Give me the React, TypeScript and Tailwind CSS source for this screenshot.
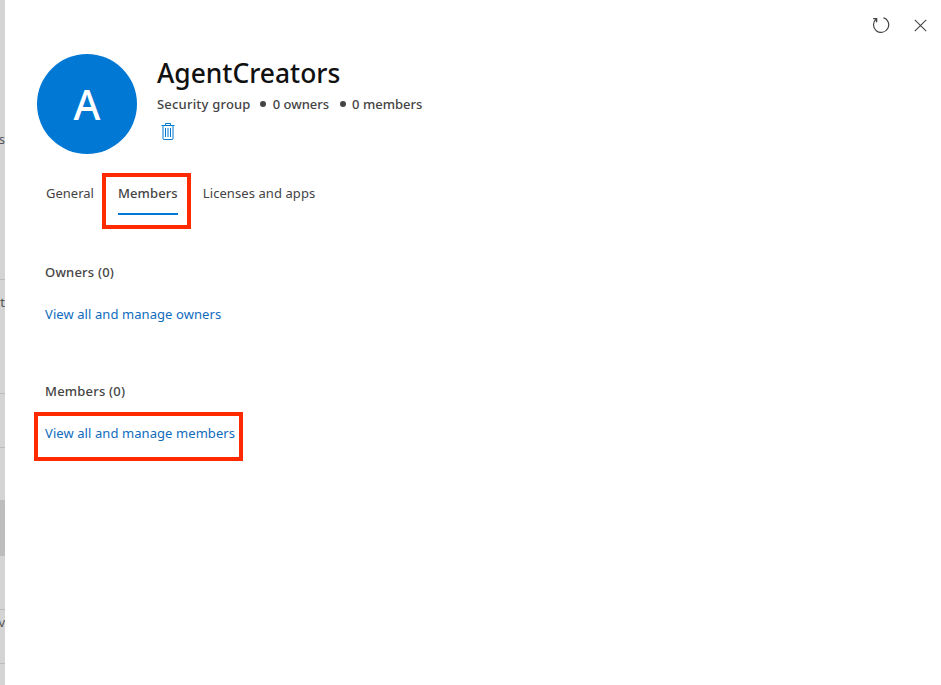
import React from "react";

function TrashIcon() {
  return (
    <svg width="14" height="17" viewBox="0 0 14 17" fill="none" stroke="#0078d4" strokeWidth="1">
      <path d="M0.5 2.5H13.5M2 2.5V15.5a1 1 0 0 0 1 1H11a1 1 0 0 0 1-1V2.5M4.5 2.5V0.5H9.5V2.5" />
      <path d="M4.5 5V14M7 5V14M9.5 5V14" />
    </svg>
  );
}

function RefreshIcon() {
  return (
    <svg width="18" height="18" viewBox="0 0 18 18" fill="none" stroke="#444" strokeWidth="1.2">
      <path d="M11.5 1.6A7.6 7.6 0 1 1 4.2 3" />
      <path d="M4.6 6.2V2.6H1.2" strokeWidth="1.4" />
    </svg>
  );
}

function CloseIcon() {
  return (
    <svg width="13" height="13" viewBox="0 0 13 13" fill="none" stroke="#444" strokeWidth="1.1">
      <path d="M0.8 0.8L12.2 12.2M12.2 0.8L0.8 12.2" />
    </svg>
  );
}

function Row({ h, text, dark, top }: { h: string; text?: string; dark?: boolean; top?: string }) {
  return (
    <div className={`${h} ${dark ? "bg-[#bdbdbd]" : ""} border-b border-[#bcbcbc] relative`}>
      {text && (
        <span className={`absolute ${top} right-0 text-[13px] leading-none text-[#555]`}>{text}</span>
      )}
    </div>
  );
}

export default function App() {
  return (
    <div className="w-[941px] h-[685px] flex overflow-hidden bg-white font-['Noto_Sans',sans-serif]">
      <div className="w-[5px] shrink-0 h-full bg-[#d4d4d4] overflow-hidden">
        <Row h="h-[280px]" text="s" top="top-[133px]" />
        <Row h="h-[114px]" text="rt" top="top-[16px]" />
        <Row h="h-[54px]" />
        <Row h="h-[53px]" />
        <Row h="h-[55px]" dark />
        <Row h="h-[54px]" text="v" top="top-[60px]" />
        <Row h="h-[54px]" />
        <div />
      </div>

      <div className="flex-1 relative pl-[32px] pt-[54px]">
        <div className="absolute top-[16px] right-[14px] flex items-center gap-[24px]">
          <RefreshIcon />
          <CloseIcon />
        </div>

        <div className="flex items-start">
          <div className="w-[100px] h-[100px] rounded-full bg-[#0078d4] flex items-center justify-center text-white text-[41px] font-medium leading-none">
            A
          </div>
          <div className="ml-[20px] pt-[2px]">
            <div className="text-[26.4px] leading-[34px] font-medium text-[#111]">AgentCreators</div>
            <div className="mt-[5px] flex items-center text-[13px] leading-[18px] font-medium text-[#444]">
              <span className="tracking-[0.2px]">Security group</span>
              <span className="ml-[9px] w-[6px] h-[6px] rounded-full bg-[#444]" />
              <span className="ml-[7px]">0 owners</span>
              <span className="ml-[11px] w-[6px] h-[6px] rounded-full bg-[#444]" />
              <span className="ml-[6px]">0 members</span>
            </div>
            <div className="mt-[10px] ml-[4px] flex">
              <TrashIcon />
            </div>
          </div>
        </div>

        <div className="mt-[28px] ml-[9px] flex text-[13px] leading-[18px] text-[#444]">
          <div className="pt-[2px]">General</div>
          <div className="ml-[24px] relative pt-[2px] pb-[13px] font-medium tracking-[0.12px]">
            Members
            <div className="absolute left-0 right-0 bottom-0 h-[2px] bg-[#0078d4]" />
            <div className="absolute left-[-16px] right-[-13px] top-[-9px] bottom-[-14px] border-[4px] border-[#ff2a00]" />
          </div>
          <div className="ml-[25px] pt-[2px] tracking-[0.08px]">Licenses and apps</div>
        </div>

        <div className="ml-[8px] mt-[48px] text-[13px] leading-[18px] font-medium tracking-[0.2px] text-[#444]">Owners (0)</div>
        <div className="ml-[8px] mt-[24px] text-[13px] leading-[18px] tracking-[0.08px] text-[#0f6cbd]">View all and manage owners</div>
        <div className="ml-[8px] mt-[59px] text-[13px] leading-[18px] font-medium tracking-[0.2px] text-[#444]">Members (0)</div>
        <div className="ml-[8px] mt-[24px] relative w-fit text-[13px] leading-[18px] tracking-[0.08px] text-[#0f6cbd]">
          View all and manage members
          <div className="absolute left-[-11px] right-[-8px] top-[-12px] bottom-[-19px] border-[4px] border-[#ff2a00]" />
        </div>
      </div>
    </div>
  );
}
